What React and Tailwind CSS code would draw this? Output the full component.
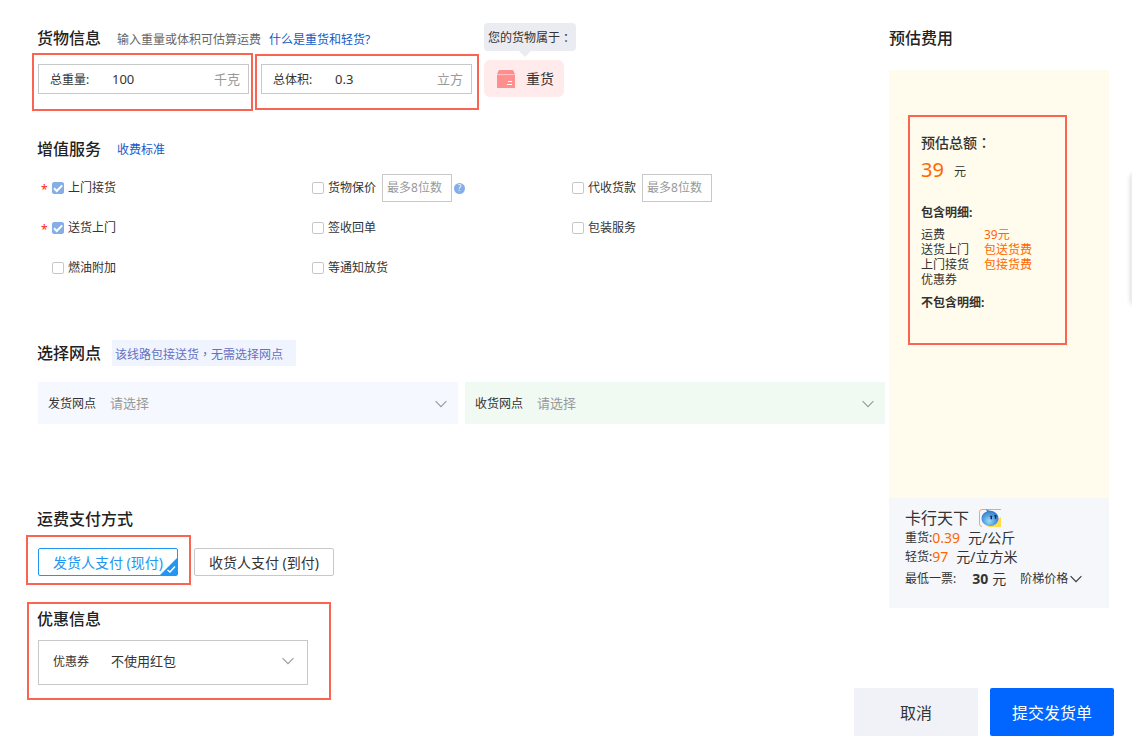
import { useState } from "react";

const services = [
  { id: "pickup", label: "上门接货", required: true, checked: true },
  { id: "insure", label: "货物保价", amount: true, help: true },
  { id: "cod", label: "代收货款", amount: true },
  { id: "delivery", label: "送货上门", required: true, checked: true },
  { id: "receipt", label: "签收回单" },
  { id: "packing", label: "包装服务" },
  { id: "fuel", label: "燃油附加" },
  { id: "notice", label: "等通知放货" },
];

const feeItems = [
  { name: "运费", value: "39元" },
  { name: "送货上门", value: "包送货费" },
  { name: "上门接货", value: "包接货费" },
  { name: "优惠券", value: "" },
];

const Title = ({ children }) => (
  <h2 className="text-base leading-6 font-medium text-[#222]">{children}</h2>
);

// full-width punctuation, centred in its em box
const Punct = ({ children }) => (
  <span className="font-['Noto_Sans_CJK_TC',sans-serif]" lang="zh-TW">{children}</span>
);

const Chevron = ({ className }) => (
  <svg viewBox="0 0 12 8" className={className} fill="none" stroke="currentColor">
    <path d="M.6 1.200 6 6.600l5.400-5.400" strokeWidth="1.100" />
  </svg>
);

const UnitField = ({ id, label, unit, defaultValue }) => (
  <div className="flex h-[30px] w-[211px] items-center border border-[#c8c8c8] bg-white pr-2 pl-[11px]">
    <label htmlFor={id} className="w-[62px] shrink-0 pt-[2px] text-xs">{label}</label>
    <input
      id={id}
      defaultValue={defaultValue}
      className="w-0 min-w-0 flex-1 pt-[2px] text-[13px] text-[#333] outline-none"
    />
    <span className="pt-[2px] text-[13px] text-[#999]">{unit}</span>
  </div>
);

const ServiceOption = ({ service }) => {
  const [checked, setChecked] = useState(!!service.checked);

  return (
    <div className="flex h-10 items-center">
      <span className="w-[11px] shrink-0 pt-1 text-xs leading-4 text-[#f22]">
        {service.required ? "*" : ""}
      </span>
      <label htmlFor={service.id} className="flex items-center gap-1 text-xs">
        <span className="relative flex">
          <input
            id={service.id}
            type="checkbox"
            checked={checked}
            onChange={(e) => setChecked(e.target.checked)}
            className="size-3 appearance-none rounded-xs border border-[#c8c8c8] bg-white checked:border-[#85aee6] checked:bg-[#85aee6]"
          />
          {checked && (
            <svg viewBox="0 0 12 12" className="pointer-events-none absolute inset-0 size-3">
              <path d="M2 6.200 4.800 9 10.200 3.400" fill="none" stroke="#fff" strokeWidth="2" />
            </svg>
          )}
        </span>
        {service.label}
      </label>
      {service.amount && (
        <input
          aria-label={service.label + "金额"}
          placeholder="最多8位数"
          className="ml-[6px] h-7 w-[70px] border border-[#c8c8c8] bg-white px-1 pb-[2px] text-xs outline-none placeholder:text-[#999]"
        />
      )}
      {service.help && (
        <button
          aria-label="保价说明"
          className="ml-[2px] flex size-[11px] items-center justify-center rounded-full bg-[#85aee6] text-[8px] leading-none text-white"
        >
          ?
        </button>
      )}
    </div>
  );
};

const PickerSelect = ({ id, label, options, boxClass, labelClass, textClass, iconClass }) => (
  <div className={boxClass}>
    <label htmlFor={id} className={labelClass}>{label}</label>
    <select id={id} className={textClass}>
      {options.map((option) => (
        <option key={option}>{option}</option>
      ))}
    </select>
    <Chevron className={iconClass} />
  </div>
);

const BoxIcon = () => (
  <svg viewBox="0 0 20 18" className="h-[18px] w-5" fill="#ff8f8f">
    <path d="M3 0h14l2 4.200H1z" />
    <path d="M1 5h18v13H1z" />
    <path d="M1 4.600h18" stroke="#ffb9bb" strokeWidth=".8" />
    <path d="M12 11.500h4M11 14.500h5" stroke="#fff" strokeWidth="1.200" />
  </svg>
);

const WangwangIcon = () => (
  <svg viewBox="0 0 22 18" className="h-[18px] w-[22px]">
    <defs>
      <radialGradient id="drop" cx=".45" cy=".7" r=".7">
        <stop offset="0" stopColor="#9bdcfb" />
        <stop offset=".5" stopColor="#559fe0" />
        <stop offset="1" stopColor="#2a68bb" />
      </radialGradient>
    </defs>
    <path d="M22 .5H3Q.5.5.5 3v12q0 2.500 2.500 2.500" fill="none" stroke="#f9a65a" />
    <path d="M8 18h14V8z" fill="#ffdc4a" />
    <path d="M7 0q1.500 1.500 4.500 1.800c4.500.4 8 3.400 8 7.600 0 4.400-3.800 7.600-8.500 7.600S2.500 13.800 2.500 9.500c0-3.500 2.200-6 5.500-7z" fill="url(#drop)" />
    <path d="M12.300 7.200v3M16.600 6.700v3" stroke="#10264d" strokeWidth="1.400" />
    <path d="M10.800 7.200h2.500M15 6.700h2.500" stroke="#10264d" strokeWidth=".9" />
  </svg>
);

const CargoSection = () => (
  <section className="flex">
    <div className="pt-[3px]">
      <div className="flex items-center pl-[11px]">
        <Title>货物信息</Title>
        <p className="ml-4 pt-1 text-xs text-[#666]">输入重量或体积可估算运费</p>
        <a href="#" className="ml-2 pt-1 text-xs text-[#1459c8]">什么是重货和轻货?</a>
      </div>
      <div className="mt-[3px] ml-[6px] flex items-center gap-[2px]">
        <div className="h-[58px] border-2 border-[#fa6450] pt-[9px] pr-[2px] pl-1">
          <UnitField id="weight" label="总重量:" unit="千克" defaultValue="100" />
        </div>
        <div className="h-14 border-2 border-[#fa6450] pt-2 pr-[5px] pl-1">
          <UnitField id="volume" label="总体积:" unit="立方" defaultValue="0.3" />
        </div>
      </div>
    </div>
    <div className="ml-[5px]">
      <div className="relative flex h-7 w-[92px] items-center rounded-sm bg-[#ebecf1] pt-[2px] pl-1 text-xs">
        您的货物属于<Punct>：</Punct>
        <svg viewBox="0 0 12 6" className="absolute top-full left-[35px] h-[6px] w-3">
          <path d="M0 0h12L6 6z" fill="#ebecf1" />
        </svg>
      </div>
      <div className="mt-[9px] flex h-[37px] w-20 items-center gap-[10px] rounded-md bg-[#ffeaec] pl-3 text-sm">
        <BoxIcon />
        重货
      </div>
    </div>
  </section>
);

const PaymentSection = () => (
  <section className="mt-[83px]">
    <div className="pl-[11px]">
      <Title>运费支付方式</Title>
    </div>
    <div className="mt-1 flex gap-[3px]">
      <div className="h-[50px] border-2 border-[#fa6450] pt-[11px] pr-[11px] pl-[10px]">
        <button className="relative h-7 w-[140px] rounded-xs border border-[#2196f3] bg-white pt-[2px] text-sm text-[#2196f3]">
          发货人支付 (现付)
          <svg viewBox="0 0 17 17" className="absolute right-0 bottom-0 size-[17px]">
            <path d="M17 0v17H0z" fill="#2196f3" />
            <path d="M7.500 12 10 14l5-5.500" fill="none" stroke="#fff" strokeWidth="1.500" />
          </svg>
        </button>
      </div>
      <button className="mt-[13px] h-7 w-[140px] rounded-xs border border-[#c8c8c8] bg-white pt-[2px] text-sm">
        收货人支付 (到付)
      </button>
    </div>
  </section>
);

const CostPanel = () => (
  <aside className="w-[220px] shrink-0 pt-[26px]">
    <Title>预估费用</Title>
    <div className="mt-5 min-h-[428px] bg-[#fffced] pt-[45px] pl-[19px]">
      <div className="h-[230px] w-[159px] border-2 border-[#fa6450] pt-[15px] pl-[11px]">
        <h3 className="text-sm leading-5 font-medium">
          预估总额<Punct>：</Punct>
        </h3>
        <p className="mt-[3px] flex items-center gap-[10px] text-xs">
          <span className="text-xl leading-7 text-[#ff6600]">39</span>
          <span className="pt-1">元</span>
        </p>
        <h4 className="mt-[19px] text-xs leading-5 font-bold">包含明细:</h4>
        <table className="mt-1 text-left text-xs leading-[15px]">
          <tbody>
            {feeItems.map((item) => (
              <tr key={item.name}>
                <th className="w-[63px] p-0 font-normal">{item.name}</th>
                <td className="p-0 text-[#ff6600]">{item.value}</td>
              </tr>
            ))}
          </tbody>
        </table>
        <h4 className="mt-[6px] text-xs leading-5 font-bold">不包含明细:</h4>
      </div>
    </div>
    <div className="h-[110px] bg-[#f5f7fa] pt-[10px] pl-4 text-sm">
      <div className="flex items-center gap-[10px] text-base leading-5">
        卡行天下
        <WangwangIcon />
      </div>
      <p className="flex items-center leading-[19px]">
        <span className="text-xs">重货:</span>
        <span className="text-[#ff6600]">0.39</span>
        <span className="ml-2">元/公斤</span>
      </p>
      <p className="flex items-center leading-[19px]">
        <span className="text-xs">轻货:</span>
        <span className="text-[#ff6600]">97</span>
        <span className="ml-2">元/立方米</span>
      </p>
      <p className="mt-[2px] flex items-center leading-[22px]">
        <span className="text-xs">最低一票:</span>
        <span className="ml-4 font-bold">30</span>
        <span className="ml-1">元</span>
        <button className="ml-[14px] flex items-center gap-[2px] text-xs">
          阶梯价格
          <Chevron className="h-2 w-3" />
        </button>
      </p>
    </div>
  </aside>
);

const App = () => {
  return (
    <div className="relative overflow-hidden bg-white pb-[15px] font-['Noto_Sans','Noto_Sans_CJK_SC',sans-serif] text-[#333]">
      <div className="flex gap-1 pr-[23px] pl-[26px]">
        <main className="min-w-0 flex-1 pt-[23px]">
          <CargoSection />

          <section className="mt-[26px]">
            <div className="flex items-center pl-[11px]">
              <Title>增值服务</Title>
              <a href="#" className="ml-4 pt-[2px] text-xs text-[#1459c8]">收费标准</a>
            </div>
            <div className="mt-[7px] grid grid-cols-[260px_260px_1fr] pl-[15px]">
              {services.map((service) => (
                <ServiceOption key={service.id} service={service} />
              ))}
            </div>
          </section>

          <section className="mt-[52px] pl-[11px]">
            <div className="flex items-center gap-[11px]">
              <Title>选择网点</Title>
              <p className="h-[26px] w-[184px] bg-[#f0f4ff] pt-px pl-[3px] text-xs leading-[26px] text-[#6670c0]">
                该线路包接送货<Punct>，</Punct>无需选择网点
              </p>
            </div>
            <div className="mt-4 ml-px flex gap-[7px]">
              <PickerSelect
                id="from"
                label="发货网点"
                options={["请选择"]}
                boxClass="relative flex h-[42px] flex-1 items-center bg-[#f5f8ff] pt-[2px] pl-[10px]"
                labelClass="w-[62px] text-xs"
                textClass="h-full flex-1 appearance-none text-[13px] text-[#999] outline-none"
                iconClass="pointer-events-none absolute top-[18px] right-[11px] h-2 w-3 text-[#999]"
              />
              <PickerSelect
                id="to"
                label="收货网点"
                options={["请选择"]}
                boxClass="relative flex h-[42px] flex-1 items-center bg-[#f0faf2] pt-[2px] pl-[10px]"
                labelClass="w-[62px] text-xs"
                textClass="h-full flex-1 appearance-none text-[13px] text-[#999] outline-none"
                iconClass="pointer-events-none absolute top-[18px] right-[11px] h-2 w-3 text-[#999]"
              />
            </div>
          </section>

          <PaymentSection />

          <section className="mt-[17px] ml-[1px] h-[98px] w-[304px] border-2 border-[#fa6450] pt-[3px] pl-2">
            <Title>优惠信息</Title>
            <div className="mt-[9px] pl-px">
              <PickerSelect
                id="coupon"
                label="优惠券"
                options={["不使用红包"]}
                boxClass="relative flex h-[45px] w-[270px] items-center border border-[#c8c8c8] pb-[2px] pl-[14px]"
                labelClass="w-[58px] text-xs"
                textClass="h-full flex-1 appearance-none text-[13px] outline-none"
                iconClass="pointer-events-none absolute top-4 right-[13px] h-2 w-3 text-[#999]"
              />
            </div>
          </section>
        </main>

        <CostPanel />
      </div>

      <footer className="-mt-3 flex justify-end gap-3 pr-[18px] text-base">
        <button className="h-12 w-[124px] bg-[#f0f2f7] pt-[2px]">取消</button>
        <button className="h-12 w-[124px] rounded-xs bg-[#0066ff] pt-[2px] text-white">提交发货单</button>
      </footer>

      {/* edge of the collapsed side toolbar */}
      <div className="absolute top-[174px] -right-[9px] h-[130px] w-[10px] rounded-sm bg-[#eee] shadow-[0_0_5px_#ccc]" />
    </div>
  );
};

export default App;
